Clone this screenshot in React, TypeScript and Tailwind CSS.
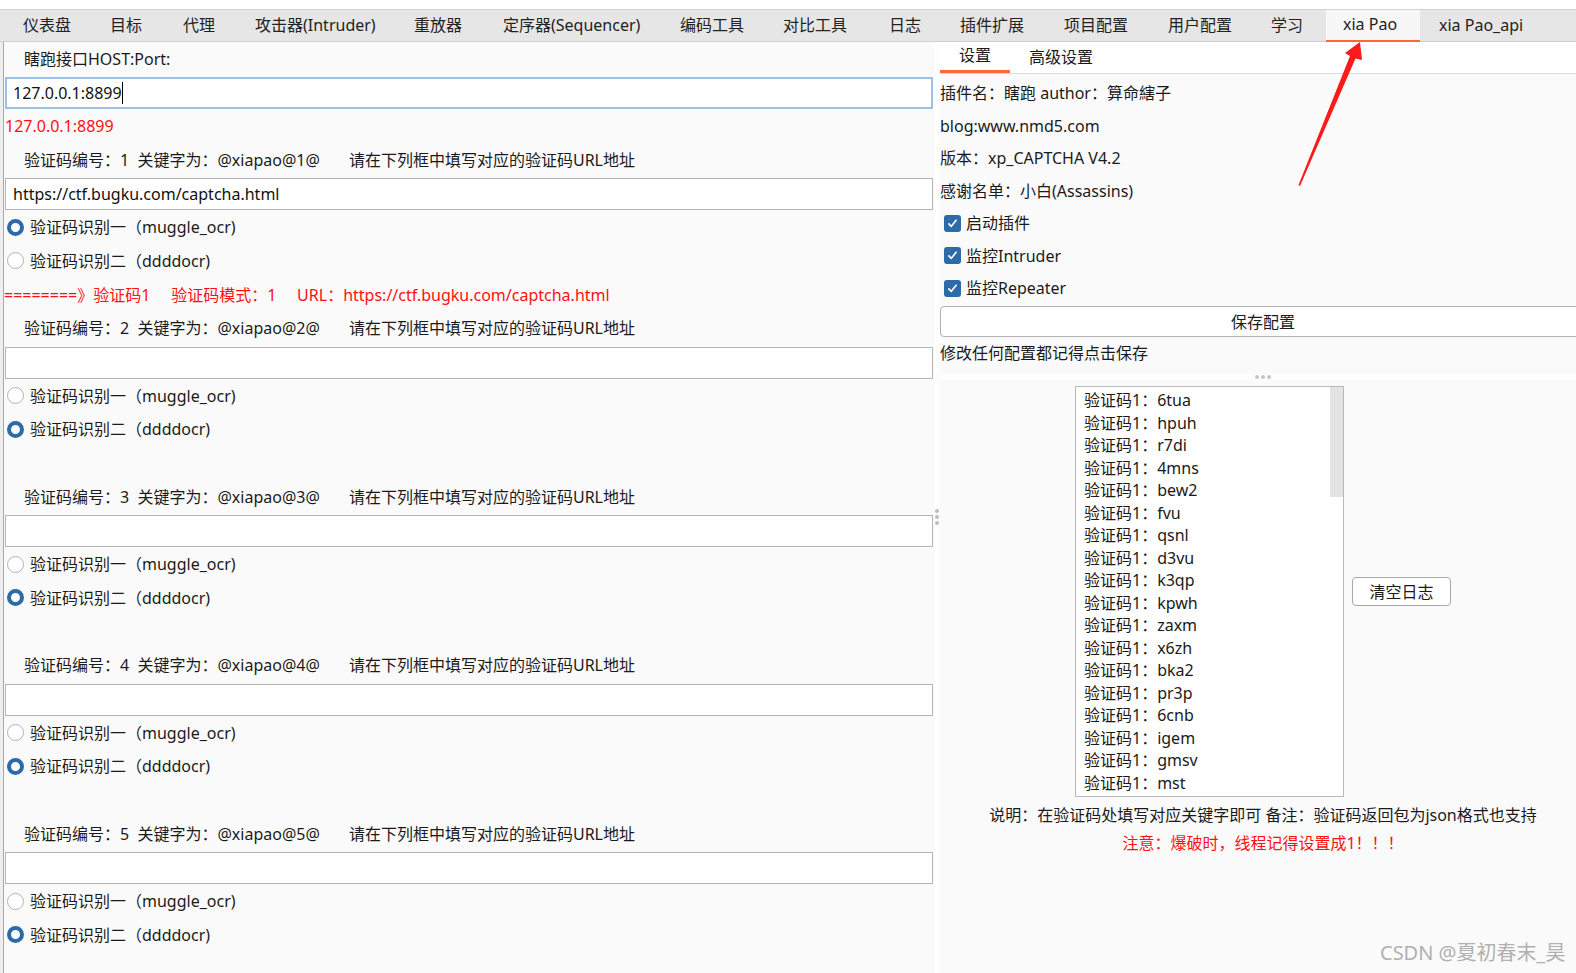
import React from "react";

const tabs = [
  { label: "仪表盘", cls: "w-[87px] pl-[20px]" },
  { label: "目标", cls: "w-[73px] pl-[20px]" },
  { label: "代理", cls: "w-[72px] pl-[20px]" },
  { label: "攻击器(Intruder)", cls: "w-[159px] pl-[20px]" },
  { label: "重放器", cls: "w-[89px] pl-[20px]" },
  { label: "定序器(Sequencer)", cls: "w-[177px] pl-[20px]" },
  { label: "编码工具", cls: "w-[103px] pl-[20px]" },
  { label: "对比工具", cls: "w-[106px] pl-[20px]" },
  { label: "日志", cls: "w-[71px] pl-[20px]" },
  { label: "插件扩展", cls: "w-[104px] pl-[20px]" },
  { label: "项目配置", cls: "w-[104px] pl-[20px]" },
  { label: "用户配置", cls: "w-[103px] pl-[20px]" },
  { label: "学习", cls: "w-[75px] pl-[20px]" },
  { label: "xia Pao", cls: "w-[94px] pl-[17px] bg-[#f7f7f7] border-b-2 border-[#ff6633]" },
  { label: "xia Pao_api", cls: "w-[130px] pl-[19px]" },
];

const logs = [
  "6tua", "hpuh", "r7di", "4mns", "bew2", "fvu", "qsnl", "d3vu", "k3qp",
  "kpwh", "zaxm", "x6zh", "bka2", "pr3p", "6cnb", "igem", "gmsv", "mst",
];

function Radio({ checked, label }: { checked: boolean; label: string }) {
  return (
    <div className="h-[33.7px] shrink-0 flex items-center pl-[3px]">
      {checked ? (
        <div className="w-[17px] h-[17px] rounded-full border-[4px] border-[#2d6aa8] bg-white" />
      ) : (
        <div className="w-[17px] h-[17px] rounded-full border border-[#b3b3b3] bg-white" />
      )}
      <span className="ml-[6px]">{label}</span>
    </div>
  );
}

function CaptchaBlock({ n, url, mode, extra }: { n: number; url?: string; mode: 1 | 2; extra?: boolean }) {
  return (
    <div className="shrink-0 flex flex-col">
      <div className="h-[33.7px] shrink-0 flex items-center pl-[20px] whitespace-pre">
        {`验证码编号：${n}  关键字为：@xiapao@${n}@       请在下列框中填写对应的验证码URL地址`}
      </div>
      <div className="h-[33.7px] shrink-0 flex items-end pl-[1px]">
        <div className="h-[32px] w-[928px] bg-white border border-[#b4b4b4] flex items-center pl-[7px] text-[#111]">
          {url}
        </div>
      </div>
      <Radio checked={mode === 1} label="验证码识别一（muggle_ocr)" />
      <Radio checked={mode === 2} label="验证码识别二（ddddocr)" />
      <div className="h-[33.7px] shrink-0 flex items-center whitespace-pre text-[#ff1111] overflow-hidden">
        {extra ? "========》验证码1     验证码模式：1     URL：https://ctf.bugku.com/captcha.html" : ""}
      </div>
    </div>
  );
}

function Checkbox({ label }: { label: string }) {
  return (
    <div className="h-[32.5px] flex items-center pl-[4px]">
      <div className="w-[17px] h-[17px] rounded-[3px] bg-[#2d6aa8] flex items-center justify-center">
        <svg viewBox="0 0 16 16" className="w-[13px] h-[13px]">
          <path d="M3.5 8.5 L6.5 11.5 L12.5 4" stroke="white" strokeWidth="2" fill="none" strokeLinecap="round" strokeLinejoin="round" />
        </svg>
      </div>
      <span className="ml-[5px]">{label}</span>
    </div>
  );
}

export default function App() {
  return (
    <div className="relative w-[1576px] h-[973px] overflow-hidden bg-[#fafafa] text-[16px] leading-[20px] text-[#1a1a1a] font-['Noto_Sans','Noto_Sans_CJK_SC',sans-serif]">
      <div className="h-[10px] bg-white border-b border-[#d2d2d2]" />
      <div className="flex h-[32px] bg-[#e6e6e6] shadow-[inset_0_-1px_0_#d0d0d0]">
        <div className="w-[3px] shrink-0" />
        {tabs.map((t) => (
          <div key={t.label} className={`h-full shrink-0 flex items-center pb-[3px] text-[#222] ${t.cls}`}>
            {t.label}
          </div>
        ))}
      </div>

      <div className="flex h-[931px]">
        <div className="w-[4px] shrink-0 bg-[#eeeeee] border-r border-[#a8a8a8]" />

        {/* left: host + captcha blocks */}
        <div className="w-[930px] shrink-0 flex flex-col overflow-hidden">
          <div className="h-[33.7px] shrink-0 flex items-center pl-[20px]">瞎跑接口HOST:Port:</div>
          <div className="h-[33.7px] shrink-0 flex items-end pl-[1px]">
            <div className="h-[32px] w-[928px] bg-white border-2 border-[#9fc0e6] flex items-center pl-[6px] text-[#111]">
              127.0.0.1:8899
              <span className="w-[1.5px] h-[22px] bg-black" />
            </div>
          </div>
          <div className="h-[33.7px] shrink-0 flex items-center pl-[1px] text-[#ff1111]">127.0.0.1:8899</div>
          <CaptchaBlock n={1} url="https://ctf.bugku.com/captcha.html" mode={1} extra />
          <CaptchaBlock n={2} mode={2} />
          <CaptchaBlock n={3} mode={2} />
          <CaptchaBlock n={4} mode={2} />
          <CaptchaBlock n={5} mode={2} />
        </div>

        <div className="w-[6px] shrink-0 bg-[#fdfdfd] flex flex-col items-center pt-[467px] gap-[2.5px]">
          <div className="w-[3.5px] h-[3.5px] rounded-full bg-[#bdbdbd]" />
          <div className="w-[3.5px] h-[3.5px] rounded-full bg-[#bdbdbd]" />
          <div className="w-[3.5px] h-[3.5px] rounded-full bg-[#bdbdbd]" />
        </div>

        {/* right: plugin settings */}
        <div className="w-[646px] shrink-0 flex flex-col">
          <div className="h-[32px] shrink-0 bg-white border-b border-[#dcdcdc] flex">
            <div className="w-[70px] h-full flex items-center justify-center pb-[2px] border-b-[3px] border-[#ff6633]">设置</div>
            <div className="w-[102px] h-full flex items-center justify-center pb-[2px]">高级设置</div>
          </div>
          <div className="pt-[3px] shrink-0 flex flex-col">
            <div className="h-[32.5px] flex items-center">插件名：瞎跑 author：算命縖子</div>
            <div className="h-[32.5px] flex items-center">blog:www.nmd5.com</div>
            <div className="h-[32.5px] flex items-center">版本：xp_CAPTCHA V4.2</div>
            <div className="h-[32.5px] flex items-center">感谢名单：小白(Assassins)</div>
            <Checkbox label="启动插件" />
            <Checkbox label="监控Intruder" />
            <Checkbox label="监控Repeater" />
            <div className="mt-[1.5px] h-[31px] w-[646px] bg-white border border-[#b0b0b0] rounded-[4px] flex items-center justify-center">
              保存配置
            </div>
            <div className="h-[32px] flex items-center">修改任何配置都记得点击保存</div>
          </div>
          <div className="h-[5px] shrink-0" />
          <div className="h-[6px] shrink-0 bg-[#fefefe] flex items-center justify-center gap-[2.5px]">
            <div className="w-[3.5px] h-[3.5px] rounded-full bg-[#c4c4c4]" />
            <div className="w-[3.5px] h-[3.5px] rounded-full bg-[#c4c4c4]" />
            <div className="w-[3.5px] h-[3.5px] rounded-full bg-[#c4c4c4]" />
          </div>
          <div className="pt-[6px] shrink-0 flex items-center justify-center gap-[8px]">
            <div className="relative w-[269px] h-[411px] bg-white border border-[#b8b8b8] pl-[8px] pt-[2px] overflow-hidden">
              {logs.map((l) => (
                <div key={l} className="h-[22.5px] flex items-center">验证码1：{l}</div>
              ))}
              <div className="absolute right-0 top-0 w-[13px] h-[110px] bg-[#e3e3e3]" />
            </div>
            <div className="w-[99px] h-[29px] bg-white border border-[#a8a8a8] rounded-[4px] flex items-center justify-center">
              清空日志
            </div>
          </div>
          <div className="mt-[2px] h-[32px] shrink-0 flex items-center justify-center whitespace-nowrap">
            说明：在验证码处填写对应关键字即可 备注：验证码返回包为json格式也支持
          </div>
          <div className="h-[24px] shrink-0 flex items-center justify-center text-[#ff1111]">
            注意：爆破时，线程记得设置成1！！！
          </div>
        </div>
      </div>

      <svg className="absolute inset-0 pointer-events-none" width="1576" height="973">
        <polygon
          points="1360,42 1362,60 1355.5,58.5 1300,186 1298.5,185 1350,56 1345,53"
          fill="#ff1a1a"
        />
      </svg>

      <div className="absolute left-[1380px] top-[940px] text-[20px] leading-[26px] text-[#b0b0b0] whitespace-nowrap">
        CSDN @夏初春末_昊
      </div>
    </div>
  );
}
